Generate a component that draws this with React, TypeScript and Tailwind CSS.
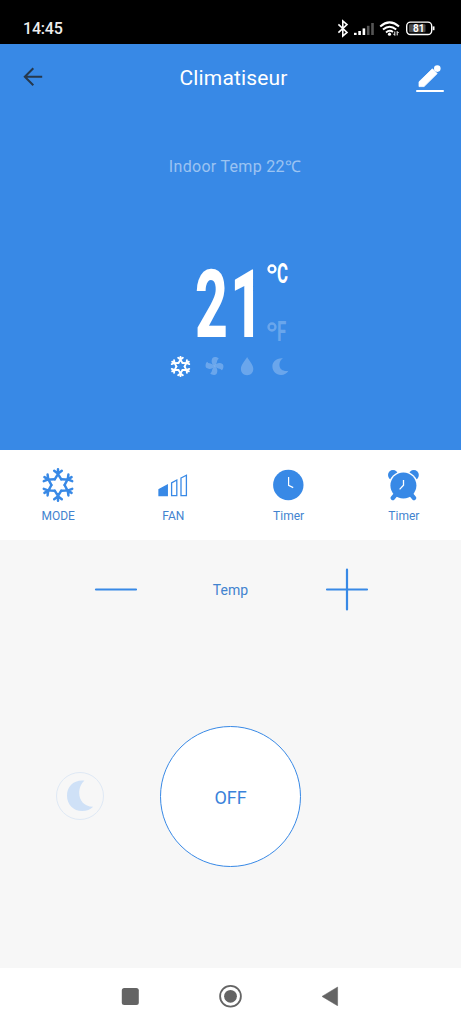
import React from "react";

const ARMS = [0, 60, 120, 180, 240, 300];

function Snowflake({ className, width }: { className: string; width: number }) {
  return (
    <svg viewBox="-16.5 -16.5 33 33" className={className} fill="none" stroke="currentColor" strokeWidth={width} strokeLinecap="round">
      {ARMS.map((angle) => (
        <g key={angle} transform={`rotate(${angle})`}>
          <path d="M0 -9.4V-15.2M-3.7 -13.8L0 -10.9L3.7 -13.8M-3.2 -5.54L0 -10.6L3.2 -5.54" />
        </g>
      ))}
    </svg>
  );
}

function StatusIcons() {
  return (
    <svg viewBox="0 0 104 24" className="h-6 w-[104px]" fill="none" stroke="#fff">
      <path d="M2.4 7.4L11 15.4L6.8 19V4L11 7.6L2.4 15.6" strokeWidth="1.6" />
      <g stroke="none" fill="#fff">
        <rect x="18" y="15.8" width="2.6" height="2.2" />
        <rect x="22.3" y="14" width="2.6" height="4" />
        <rect x="26.6" y="11.4" width="2.6" height="6.6" />
        <rect x="30.9" y="8.8" width="2.6" height="9.2" fill="#555" />
        <rect x="35.2" y="6" width="2.6" height="12" fill="#555" />
      </g>
      <path d="M44.2 9.4Q53.6 1.4 63 9.4M47 12.6Q53.6 7 60.2 12.6M50 15.4Q53.6 12.4 57 15" strokeWidth="2" />
      <circle cx="53.5" cy="17.2" r="1.6" fill="#fff" stroke="none" />
      <path d="M58.8 14.5V18.4M58.8 18.4L57.4 16.8M61.2 18.4V14.5M61.2 14.5L62.6 16" strokeWidth="1" />
      <rect x="70.7" y="5.1" width="25" height="12.4" rx="3.8" strokeWidth="1.4" />
      <rect x="73" y="7.3" width="16.5" height="8" rx="1" fill="#4a4a4a" stroke="none" />
      <path d="M97.6 9.4V13.2" strokeWidth="1.8" />
      <text x="82.8" y="15" textAnchor="middle" fill="#fff" stroke="none" className="font-[Roboto,sans-serif] text-[10px] font-bold">81</text>
    </svg>
  );
}

function Unit({ letter, className }: { letter: string; className: string }) {
  return (
    <div className={`flex h-5 w-[24px] items-start ${className}`}>
      <svg viewBox="0 0 10 10" className="h-[10px] w-[10px] shrink-0">
        <circle cx="5" cy="5" r="3.5" fill="none" stroke="currentColor" strokeWidth="2.3" />
      </svg>
      <span className="origin-left scale-x-[0.6] text-[28px] leading-5 font-bold">{letter}</span>
    </div>
  );
}

function Control({ label, children }: { label: string; children: React.ReactNode }) {
  return (
    <button className="flex flex-1 flex-col items-center pt-[18px] pl-px text-[#3889e6]">
      <span className="flex h-[34px] items-center justify-center">{children}</span>
      <span className="mt-[5px] text-xs leading-[18px] text-[#4283cf]">{label}</span>
    </button>
  );
}

export default function App() {
  return (
    <div className="flex h-[1024px] w-[461px] flex-col overflow-hidden bg-[#f7f7f7] font-[Roboto,sans-serif]">
      <div className="flex h-[44px] shrink-0 items-center justify-between bg-black pt-[13px] pr-[21px] pl-[23px]">
        <span className="pt-px text-base leading-none font-medium tracking-[-0.2px] text-[#eee]">14:45</span>
        <StatusIcons />
      </div>

      <section className="flex h-[406px] shrink-0 flex-col items-center bg-[#3889e6] text-white">
        <header className="flex h-[66px] w-full items-center justify-between pr-[16px] pl-[23px]">
          <svg viewBox="0 0 20 20" className="h-5 w-[29px] text-[#26384c]" preserveAspectRatio="xMinYMid" fill="none" stroke="currentColor" strokeWidth="2">
            <path d="M10.3 1.2L1.8 9.7L10.3 18.2M1.8 9.7H19.2" />
          </svg>
          <h1 className="pt-px text-[21px] leading-7 tracking-[0.15px]">Climatiseur</h1>
          <svg viewBox="0 0 30 30" className="h-[30px] w-[30px]" fill="currentColor">
            <path d="M4 19.8L17.4 6.8L22.2 11.6L9 24.6H4Z" stroke="currentColor" strokeWidth=".8" strokeLinejoin="round" />
            <circle cx="22.3" cy="6.6" r="3.3" />
            <rect x="1" y="28" width="28" height="1.9" rx=".9" />
          </svg>
        </header>

        <p className="mt-[45px] pl-[9px] text-base leading-6 tracking-[0.3px] text-white/50">Indoor Temp 22℃</p>

        <div className="mt-[85px] ml-[195px] flex h-[78px] w-[97px] self-start">
          <div className="flex h-[78px] w-[72px] items-center">
            <span className="origin-left translate-y-0.5 scale-x-[0.6] text-[95px] leading-[78px] font-extrabold tracking-[4px]">21</span>
          </div>
          <div className="flex flex-col justify-between">
            <Unit letter="C" className="text-white" />
            <Unit letter="F" className="text-white/25" />
          </div>
        </div>

        <div className="mt-[14px] ml-[170px] flex h-5 items-center gap-[12.5px] self-start">
          <Snowflake className="h-[21px] w-[21px]" width={2.9} />
          <svg viewBox="-10 -10 20 20" className="h-5 w-[21px] text-white/25" fill="currentColor">
            {[8, 98, 188, 278].map((angle) => (
              <path key={angle} transform={`rotate(${angle})`} d="M-.2 .2C-3.2 -1.6 -4.5 -4.8 -2.9 -8C-1.5 -9.4 2.2 -9.2 3.2 -7.8C1.3 -6.2 2.2 -4.6 1.6 -3C1.2 -1.9 .6 -1 .2 -.2Z" />
            ))}
          </svg>
          <svg viewBox="0 0 20 20" className="h-5 w-[21px] text-white/25" fill="currentColor">
            <path d="M9.6 1C7.6 4.8 3.4 8.4 3.4 12.8C3.4 16.7 6 19.2 9.6 19.2S15.8 16.7 15.8 12.8C15.8 8.4 11.6 4.8 9.6 1Z" />
          </svg>
          <svg viewBox="0 0 20 20" className="h-5 w-[21px] text-white/25" fill="currentColor">
            <path d="M11.3 2.4C4.9 1.9 .9 6 .9 10.5C.9 15.2 4.6 19 9.5 19C12.8 19 15.5 17.3 17 14.7C13.2 15.8 7.9 14.2 7.9 8.8C7.9 5.8 9.3 3.5 11.3 2.4Z" />
          </svg>
        </div>
      </section>

      <nav className="flex h-[90px] shrink-0 bg-white">
        <Control label="MODE">
          <Snowflake className="h-[34px] w-[34px]" width={2.4} />
        </Control>
        <Control label="FAN">
          <svg viewBox="0 0 30 24" className="h-6 w-[30px]" fill="none" stroke="currentColor" strokeWidth="1.3">
            <path d="M1 16.6L9.3 12.2V22.6H1Z" fill="currentColor" />
            <path d="M13.6 9.9L18.8 7V22.6H13.6ZM23 5L28.4 2.2V22.6H23Z" />
          </svg>
        </Control>
        <Control label="Timer">
          <svg viewBox="0 0 32 32" className="h-8 w-8">
            <circle cx="15.3" cy="16" r="15.2" fill="currentColor" />
            <path d="M15.6 8V16.4L20.2 18.6" fill="none" stroke="#fff" strokeWidth="1.2" />
          </svg>
        </Control>
        <Control label="Timer">
          <svg viewBox="0 0 32 32" className="h-8 w-8" fill="currentColor">
            <circle cx="5" cy="6.1" r="5" />
            <circle cx="25.8" cy="6.1" r="5" />
            <circle cx="15.4" cy="17" r="14.7" fill="#fff" />
            <circle cx="15.4" cy="16.5" r="13" />
            <path d="M7.3 26L4.8 29M23.5 26L26 29" fill="none" stroke="currentColor" strokeWidth="4.4" strokeLinecap="round" />
            <path d="M15.5 11V16.2L11.6 20.4" fill="none" stroke="#fff" strokeWidth="1.3" />
          </svg>
        </Control>
      </nav>

      <main className="flex grow flex-col bg-[#f7f7f7] text-[#3889e6]">
        <div className="mt-[28px] flex h-[44px] items-center justify-between pr-[92px] pl-[94px]">
          <svg viewBox="0 0 44 44" className="h-11 w-11" stroke="currentColor" strokeWidth="2.2" strokeLinecap="round">
            <path d="M2 21.5H42" />
          </svg>
          <span className="pr-[2px] text-sm leading-5 tracking-[0.1px] text-[#4283cf]">Temp</span>
          <svg viewBox="0 0 44 44" className="h-11 w-11" stroke="currentColor" strokeWidth="2.2" strokeLinecap="round">
            <path d="M2 21.5H42M22 1.7V41.5" />
          </svg>
        </div>
        <div className="mt-[114px] flex items-center pl-[56px]">
          <button className="mb-px flex h-12 w-12 items-center justify-center rounded-full border border-[#dfe9f5] text-[#cfe1f7]">
            <svg viewBox="0 0 28 32" className="h-8 w-7" fill="currentColor">
              <path d="M18.5 .7C7 -.2 1 7 1 15.7C1 24.5 7.5 31 16.2 31C20.6 31 24.6 29.6 27.2 26.8C18.5 27 13.2 20.7 13.2 13.1C13.2 8 15.1 3.3 18.5 .7Z" />
            </svg>
          </button>
          <button className="ml-[56px] flex h-[141px] w-[141px] items-center justify-center rounded-full border-[1.5px] border-[#3889e6] bg-white pt-0.5 text-lg leading-6 tracking-[-0.1px] text-[#3982da]">OFF</button>
        </div>
      </main>

      <footer className="flex h-[56px] shrink-0 items-center justify-between bg-white px-[120px] text-[#646464]">
        <svg viewBox="0 0 20 20" className="h-5 w-5" fill="currentColor"><rect x="1.8" y="2" width="17" height="17" rx="2.5" /></svg>
        <svg viewBox="0 0 24 24" className="h-6 w-6" fill="currentColor">
          <circle cx="11.5" cy="12.3" r="10.4" fill="none" stroke="currentColor" strokeWidth="1.8" />
          <circle cx="11.5" cy="12.3" r="6.4" />
        </svg>
        <svg viewBox="0 0 20 20" className="h-5 w-5" fill="currentColor"><path d="M1 10.4L16.6 1V19.8Z" stroke="currentColor" strokeWidth=".5" strokeLinejoin="round" /></svg>
      </footer>
    </div>
  );
}
